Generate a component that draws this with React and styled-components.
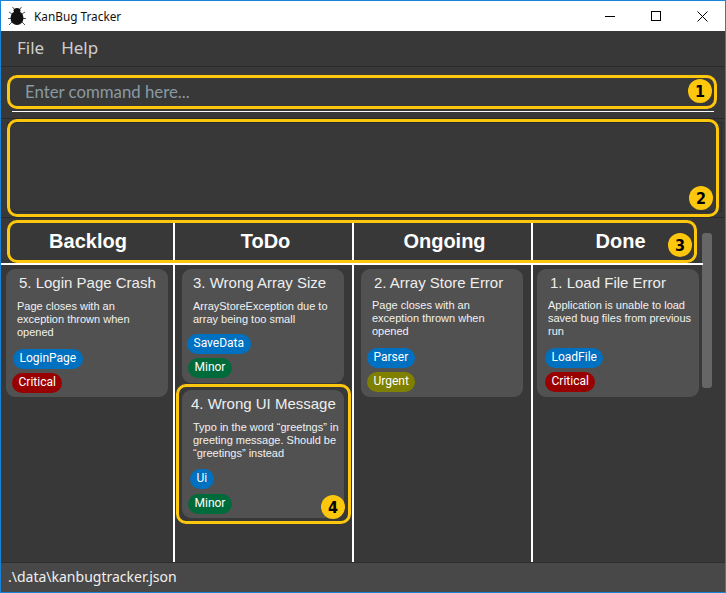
import React from 'react';
import styled, { createGlobalStyle } from 'styled-components';

const GlobalStyle = createGlobalStyle`
  html, body {
    margin: 0;
    padding: 0;
    background: #383838;
  }
  * {
    box-sizing: border-box;
  }
`;

const Window = styled.div`
  position: relative;
  width: 726px;
  height: 593px;
  display: flex;
  flex-direction: column;
  border: 1px solid #1883d7;
  background: #383838;
  overflow: hidden;
`;

const TitleBar = styled.header`
  height: 30px;
  flex: none;
  display: flex;
  align-items: center;
  padding-left: 7px;
  background: #fff;
`;

const AppTitle = styled.span`
  margin-left: 8px;
  font: 11.8px "Noto Sans", sans-serif;
  color: #111;
`;

const WindowButtons = styled.div`
  display: flex;
  margin-left: auto;
  color: #000;
`;

const WindowButton = styled.div`
  width: 46px;
  height: 30px;
  display: flex;
  align-items: center;
  justify-content: center;
`;

const MenuBar = styled.nav`
  height: 36px;
  flex: none;
  display: flex;
  align-items: center;
  gap: 17px;
  padding: 0 0 2px 16px;
  background: #383838;
  border-bottom: 1px solid #2a2a2a;
`;

const MenuItem = styled.span`
  font: 17px "Noto Sans", sans-serif;
  color: #cfcfcf;
`;

const Section = styled.section`
  position: relative;
  flex: none;
  height: ${(p) => p.$height}px;
  border-bottom: 1px solid #2a2a2a;
`;

const CommandText = styled.div`
  margin: 0 11px;
  height: 45px;
  padding: 13px 0 0 13px;
  border-bottom: 1px solid #fff;
  font: 16.8px Lato, sans-serif;
  line-height: 23px;
  color: #8a9aa2;
`;

const ResultBox = styled.div`
  height: 90px;
  margin: 3px 3px 0 6px;
  background: #383838;
  border: 1px solid #2c2c2c;
`;

const Board = styled.main`
  flex: 1;
  min-height: 0;
  display: flex;
`;

const Columns = styled.div`
  position: relative;
  width: 700px;
  display: grid;
  grid-template-columns: 174px 179px 179px 168px;
  padding-top: 5px;
`;

const Column = styled.div`
  display: flex;
  flex-direction: column;
  border-right: ${(p) => (p.$last ? 'none' : '2px solid #fff')};
`;

const ColumnTitle = styled.h2`
  height: 42px;
  margin: 0 -2px 0 0;
  flex: none;
  padding: 5px 0 0 ${(p) => p.$shift}px;
  text-align: center;
  font: bold 20px/26px "Liberation Sans", sans-serif;
  color: #fff;
  border-bottom: 2px solid #fff;
`;

const CardList = styled.div`
  display: flex;
  flex-direction: column;
  gap: 7px;
  padding: 4px 0 0 ${(p) => p.$inset}px;
`;

const Card = styled.article`
  position: relative;
  width: 162px;
  height: ${(p) => p.$height}px;
  padding: 5px 0 0 6px;
  border-radius: 9px;
  background: #515151;
`;

const CardTitle = styled.h3`
  margin: 0 0 0 ${(p) => p.$indent}px;
  font: 15px/18px "Liberation Sans", sans-serif;
  color: #eee;
  white-space: nowrap;
`;

const CardText = styled.p`
  width: 147px;
  margin: ${(p) => p.$top}px 0 0 5px;
  font: 11px/13px "Liberation Sans", sans-serif;
  color: #f2f2f2;
`;

const Tags = styled.div`
  display: flex;
  flex-direction: column;
  align-items: flex-start;
  gap: ${(p) => p.$gap}px;
  margin-top: ${(p) => p.$top}px;
`;

const Pill = styled.span`
  display: inline-block;
  height: 20px;
  margin-left: ${(p) => p.$shift}px;
  padding: 0 6.5px;
  border-radius: 10px;
  font: 12px/19px Roboto, sans-serif;
  color: #fff;
  background: ${(p) => p.$color};
`;

const Scrollbar = styled.div`
  width: 10px;
  height: 155px;
  margin: 15px 0 0 1px;
  border-radius: 3px;
  background: #666;
`;

const StatusBar = styled.footer`
  height: 30px;
  flex: none;
  padding: 4px 0 0 7px;
  background: #484848;
  border-top: 1px solid #2e2e2e;
  font: 14px/20px "Noto Sans", sans-serif;
  color: #f0f0f0;
`;

const Highlight = styled.div`
  position: absolute;
  top: ${(p) => p.$top}px;
  left: ${(p) => p.$left}px;
  width: ${(p) => p.$width}px;
  height: ${(p) => p.$height}px;
  border: 3px solid #fdc70e;
  border-radius: 10px;
  pointer-events: none;
`;

const Badge = styled.div`
  position: absolute;
  top: ${(p) => p.$top}px;
  left: ${(p) => p.$left}px;
  width: 24px;
  height: 24px;
  display: flex;
  align-items: center;
  justify-content: center;
  border-radius: 50%;
  background: #fdc70e;
  font: bold 16px "DejaVu Sans Condensed", "DejaVu Sans", sans-serif;
  color: #000;
`;

const BugIcon = () => (
  <svg width="18" height="20" viewBox="0 0 18 20" fill="none" stroke="#555" strokeWidth="1">
    <path d="M6 3 4.500 1M12 3l1.500-2M4 8 1 6M14 8l3-2M3 12.500H0M15 12.500h3M4 16l-3 3M14 16l3 3" />
    <ellipse cx="9" cy="12" rx="6.500" ry="7" fill="#111" stroke="none" />
    <ellipse cx="9" cy="4.500" rx="3.500" ry="2.500" fill="#111" stroke="none" />
  </svg>
);

const BLUE = '#0070c0';
const RED = '#990000';
const GREEN = '#006b3a';
const OLIVE = '#808000';

const columns = [
  {
    title: 'Backlog',
    shift: 0,
    inset: 5,
    cards: [
      {
        height: 128,
        title: '5. Login Page Crash',
        titleIndent: 7,
        textTop: 8,
        text: 'Page closes with an exception thrown when opened',
        tagsTop: 10,
        tagsGap: 4,
        tags: [['LoginPage', BLUE, 1], ['Critical', RED, 0]],
      },
    ],
  },
  {
    title: 'ToDo',
    shift: 2,
    inset: 7,
    cards: [
      {
        height: 114,
        title: '3. Wrong Array Size',
        titleIndent: 5,
        textTop: 8,
        text: 'ArrayStoreException due to array being too small',
        tagsTop: 8,
        tagsGap: 4,
        tags: [['SaveData', BLUE, -1], ['Minor', GREEN, 0]],
      },
      {
        height: 128,
        title: '4. Wrong UI Message',
        titleIndent: 3,
        textTop: 8,
        text: 'Typo in the word “greetngs” in greeting message. Should be “greetings” instead',
        tagsTop: 9,
        tagsGap: 5,
        tags: [['Ui', BLUE, 2], ['Minor', GREEN, 0]],
      },
    ],
  },
  {
    title: 'Ongoing',
    shift: 2,
    inset: 7,
    cards: [
      {
        height: 128,
        title: '2. Array Store Error',
        titleIndent: 7,
        textTop: 7,
        text: 'Page closes with an exception thrown when opened',
        tagsTop: 10,
        tagsGap: 4,
        tags: [['Parser', BLUE, 0], ['Urgent', OLIVE, 0]],
      },
    ],
  },
  {
    title: 'Done',
    shift: 5,
    inset: 4,
    cards: [
      {
        height: 128,
        title: '1. Load File Error',
        titleIndent: 7,
        textTop: 7,
        text: 'Application is unable to load saved bug files from previous run',
        tagsTop: 10,
        tagsGap: 4,
        tags: [['LoadFile', BLUE, 2], ['Critical', RED, 2]],
      },
    ],
  },
];

const App = () => {
  return (
    <Window>
      <GlobalStyle />
      <TitleBar>
        <BugIcon />
        <AppTitle>KanBug Tracker</AppTitle>
        <WindowButtons>
          <WindowButton>
            <svg width="10" height="10"><path d="M0 5.500h10" stroke="#000" /></svg>
          </WindowButton>
          <WindowButton>
            <svg width="10" height="10"><rect x=".5" y=".5" width="9" height="9" fill="none" stroke="#000" /></svg>
          </WindowButton>
          <WindowButton>
            <svg width="11" height="11"><path d="M.5.5l10 10M10.500.5l-10 10" stroke="#000" /></svg>
          </WindowButton>
        </WindowButtons>
      </TitleBar>
      <MenuBar>
        <MenuItem>File</MenuItem>
        <MenuItem>Help</MenuItem>
      </MenuBar>
      <Section $height={52}>
        <CommandText>Enter command here...</CommandText>
      </Section>
      <Section $height={99}>
        <ResultBox />
      </Section>
      <Board>
        <Columns>
          {columns.map((col, i) => (
            <Column key={col.title} $last={i === 3}>
              <ColumnTitle $shift={col.shift}>{col.title}</ColumnTitle>
              <CardList $inset={col.inset}>
                {col.cards.map((card) => (
                  <Card key={card.title} $height={card.height}>
                    <CardTitle $indent={card.titleIndent}>{card.title}</CardTitle>
                    <CardText $top={card.textTop}>{card.text}</CardText>
                    <Tags $top={card.tagsTop} $gap={card.tagsGap}>
                      {card.tags.map(([label, color, shift]) => (
                        <Pill key={label} $color={color} $shift={shift}>{label}</Pill>
                      ))}
                    </Tags>
                  </Card>
                ))}
              </CardList>
            </Column>
          ))}
        </Columns>
        <Scrollbar />
      </Board>
      <StatusBar>.\data\kanbugtracker.json</StatusBar>

      <Highlight $top={74} $left={6} $width={710} $height={34} />
      <Badge $top={78} $left={687}>1</Badge>
      <Highlight $top={118} $left={6} $width={712} $height={98} />
      <Badge $top={185} $left={688}>2</Badge>
      <Highlight $top={219} $left={6} $width={690} $height={43} />
      <Badge $top={232} $left={667}>3</Badge>
      <Highlight $top={383} $left={175} $width={175} $height={140} />
      <Badge $top={494} $left={320}>4</Badge>
    </Window>
  );
};

export default App;
